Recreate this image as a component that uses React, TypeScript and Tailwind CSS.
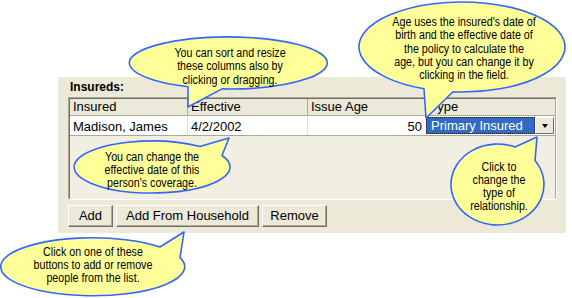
import React from 'react';

// speech-balloon callouts drawn over the dialog
const balloons = [
  { d: 'M222 88.9 A99 26 0 1 0 188 86.7 L188 107 Z' },
  { d: 'M453 91.8 A103 45 0 1 0 424 88.8 L426 118 Z' },
  { d: 'M222 155.5 A78 26 0 1 1 200 146.5 L229 138 Z' },
  { d: 'M535 160.6 A46.5 40.5 0 1 1 515 147 L537 137 Z' },
  { d: 'M180 257.6 A92 29 0 1 1 160 247 L184 232 Z' },
];

const notes = [
  { cls: 'left-[120px] top-[47px] w-[220px]', lines: ['You can sort and resize', 'these columns also by', 'clicking or dragging.'] },
  {
    cls: 'left-[354px] top-[16px] w-[220px]',
    lines: ["Age uses the insured's date of", 'birth and the effective date of', 'the policy to calculate the', 'age, but you can change it by', 'clicking in the field.'],
  },
  { cls: 'left-[62px] top-[150.5px] w-[180px]', lines: ['You can change the', 'effective date of this', "person's coverage."] },
  { cls: 'left-[439px] top-[160.5px] w-[120px]', lines: ['Click to', 'change the', 'type of', 'relationship.'] },
  { cls: 'left-[-7px] top-[245.5px] w-[200px]', lines: ['Click on one of these', 'buttons to add or remove', 'people from the list.'] },
];

const XpButton: React.FC<{ label: string; width: string }> = ({ label, width }) => (
  <button
    className={`${width} h-[22px] bg-[#ECE9D8] border border-t-white border-l-white border-b-[#716F64] border-r-[#716F64] shadow-[inset_-1px_-1px_0_#ACA899] text-[13px] leading-[20px] text-black text-center`}
  >
    {label}
  </button>
);

export default function App() {
  return (
    <div className="relative w-[572px] h-[298px] bg-white overflow-hidden font-['Liberation_Sans',Arial,sans-serif]">
      <div className="ml-[58px] mt-[77px] w-[508px] h-[156px] bg-[#ECE9D8] pt-[3px] pl-[10px] flex flex-col">
        <div className="ml-[2px] text-[12px] leading-[15px] font-bold text-black">Insureds:</div>

        <div className="mt-[2px] w-[489px] h-[103px] border border-t-[#ACA899] border-l-[#ACA899] border-b-white border-r-white">
          <div className="h-full border border-t-[#716F64] border-l-[#716F64] border-b-[#F1EFE2] border-r-[#ACA899] bg-[#F1EFE2] flex flex-col text-[13px] text-black">
            {/* header */}
            <div className="flex h-[17px] bg-[#EBE9DA] border-b border-[#ACA899] leading-[16px]">
              <div className="w-[118px] pl-[3px] border-r border-[#ACA899]">Insured</div>
              <div className="w-[120px] pl-[3px] border-r border-[#ACA899]">Effective</div>
              <div className="w-[118px] pl-[3px] border-r border-[#ACA899]">Issue Age</div>
              <div className="flex-1 pl-[4px]">Type</div>
            </div>
            {/* row */}
            <div className="flex h-[20px] bg-white border-b border-[#ACA899] leading-[19px]">
              <div className="w-[118px] pl-[3px] pt-[1px] border-r border-[#E4E2D6]">Madison, James</div>
              <div className="w-[120px] pl-[3px] pt-[1px] border-r border-[#E4E2D6]">4/2/2002</div>
              <div className="w-[118px] pr-[4px] pt-[1px] text-right">50</div>
              <div className="flex-1 flex items-start pt-[1px]">
                <div className="w-[109px] h-[17px] bg-[#316AC5] border border-dotted border-[#1a1a1a] text-white leading-[15px] pl-[4px]">
                  Primary Insured
                </div>
                <div className="w-[19px] h-[17px] bg-[#ECE9D8] border border-t-white border-l-white border-b-[#716F64] border-r-[#716F64] flex items-center justify-center">
                  <div className="w-0 h-0 border-l-[3.5px] border-r-[3.5px] border-t-[4px] border-l-transparent border-r-transparent border-t-black" />
                </div>
              </div>
            </div>
          </div>
        </div>

        <div className="mt-[5px] flex gap-[3px]">
          <XpButton label="Add" width="w-[45px]" />
          <XpButton label="Add From Household" width="w-[143px]" />
          <XpButton label="Remove" width="w-[65px]" />
        </div>
      </div>

      <svg className="absolute inset-0" width="572" height="298" viewBox="0 0 572 298">
        {balloons.map((b, i) => (
          <path key={i} d={b.d} fill="#FFFF99" stroke="#3366FF" strokeWidth="1.6" strokeLinejoin="round" />
        ))}
      </svg>

      {notes.map((n, i) => (
        <div
          key={i}
          className={`absolute ${n.cls} scale-x-[0.89] text-center text-[12px] leading-[13.3px] text-black`}
        >
          {n.lines.map((l) => (
            <div key={l}>{l}</div>
          ))}
        </div>
      ))}
    </div>
  );
}
